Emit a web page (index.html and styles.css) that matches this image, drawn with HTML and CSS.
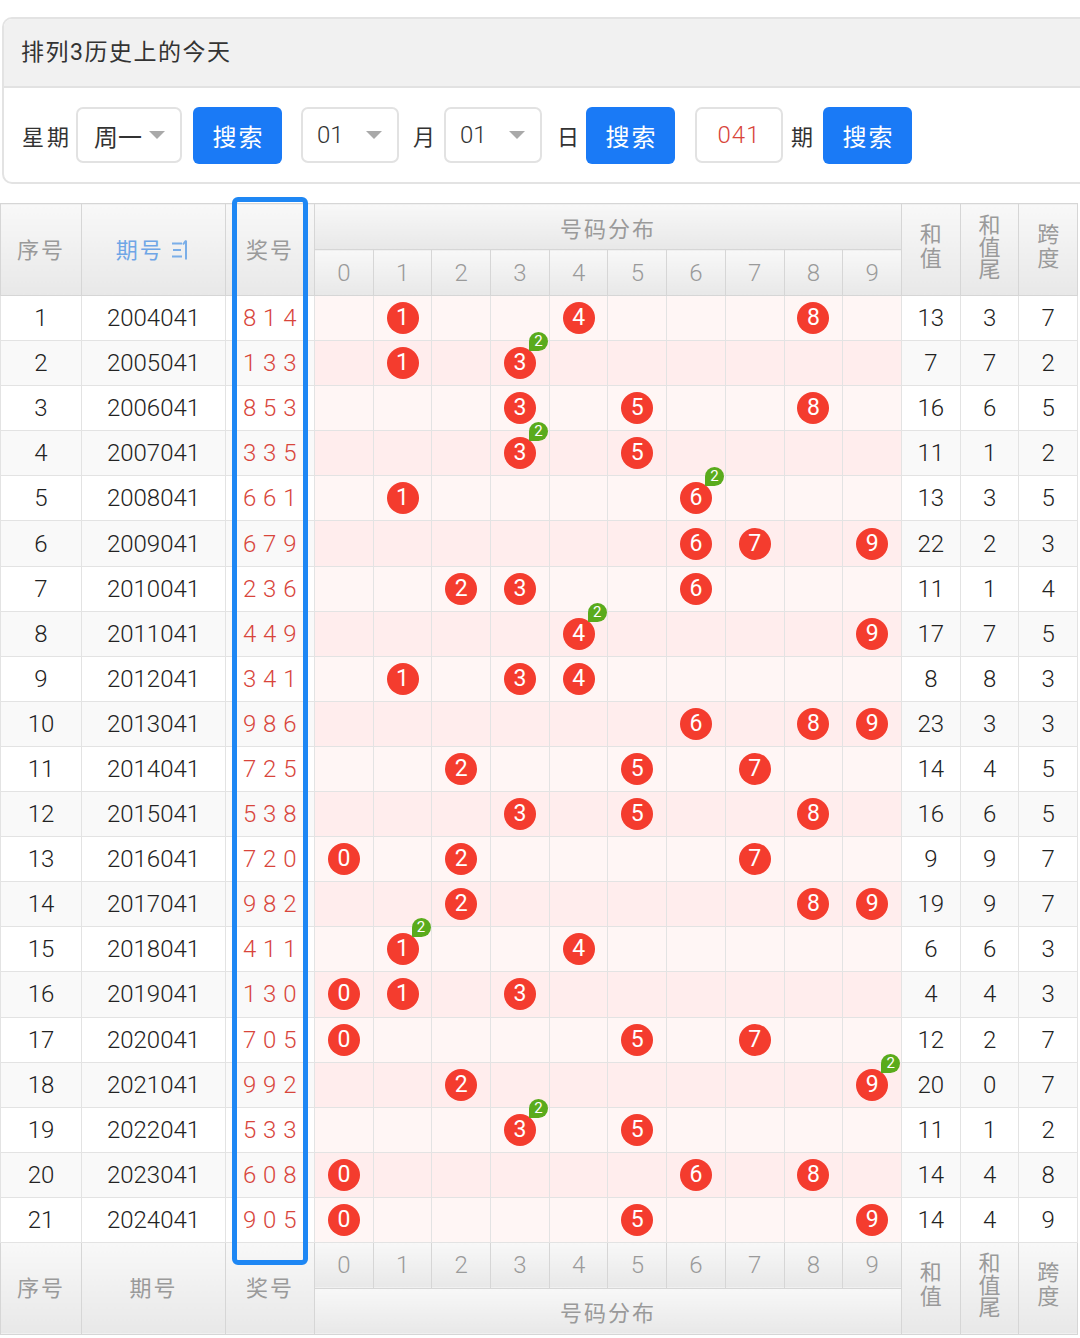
FILE: index.html
```html
<!DOCTYPE html>
<html lang="zh-CN">
<head>
<meta charset="utf-8">
<title>排列3历史上的今天</title>
<link rel="stylesheet" href="styles.css">
</head>
<body>
<div class="panel">
  <div class="panel-head">排列3历史上的今天</div>
  <div class="panel-body">
    <span class="lbl lbl-wide mr4">星期</span>
    <div class="sel sel-w mr11"><span>周一</span><i class="caret"></i></div>
    <button class="btn mr19">搜索</button>
    <div class="sel mr14"><span>01</span><i class="caret"></i></div>
    <span class="lbl mr9">月</span>
    <div class="sel mr15"><span>01</span><i class="caret"></i></div>
    <span class="lbl mr7">日</span>
    <button class="btn mr20">搜索</button>
    <div class="inp mr8">041</div>
    <span class="lbl mr10">期</span>
    <button class="btn">搜索</button>
  </div>
</div>

<div class="table-wrap">
  <table class="chart">
    <colgroup>
      <col class="c-seq"><col class="c-per"><col class="c-win">
      <col class="c-n"><col class="c-n"><col class="c-n"><col class="c-n"><col class="c-n">
      <col class="c-n"><col class="c-n"><col class="c-n"><col class="c-n"><col class="c-n">
      <col class="c-s"><col class="c-s"><col class="c-s">
    </colgroup>
    <thead>
      <tr class="hr">
        <th rowspan="2" class="tl">序号</th>
        <th rowspan="2" class="tl sort">期号 <svg class="sort-ico" width="20" height="24" viewBox="0 0 20 24"><path d="M1 5.5h10M2 12h8M1 18.5h10M15 2.5v19M15 2.5l-3 4" fill="none" stroke="#7aaee8" stroke-width="2"/></svg></th>
        <th rowspan="2" class="tl">奖号</th>
        <th colspan="10">号码分布</th>
        <th rowspan="2" class="vt"><span class="vtxt">和值</span></th>
        <th rowspan="2" class="vt"><span class="vtxt tight">和值尾</span></th>
        <th rowspan="2" class="vt"><span class="vtxt">跨度</span></th>
      </tr>
      <tr class="hr dg">
        <th>0</th><th>1</th><th>2</th><th>3</th><th>4</th><th>5</th><th>6</th><th>7</th><th>8</th><th>9</th>
      </tr>
    </thead>
    <tbody>
      <tr class="r1"><td>1</td><td>2004041</td><td class="win">8 1 4</td>
        <td class="n"></td><td class="n"><i class="ball">1</i></td><td class="n"></td><td class="n"></td><td class="n"><i class="ball">4</i></td><td class="n"></td><td class="n"></td><td class="n"></td><td class="n"><i class="ball">8</i></td><td class="n"></td>
        <td>13</td><td>3</td><td>7</td></tr>
      <tr class="r2"><td>2</td><td>2005041</td><td class="win">1 3 3</td>
        <td class="n"></td><td class="n"><i class="ball">1</i></td><td class="n"></td><td class="n"><i class="ball">3<b class="badge">2</b></i></td><td class="n"></td><td class="n"></td><td class="n"></td><td class="n"></td><td class="n"></td><td class="n"></td>
        <td>7</td><td>7</td><td>2</td></tr>
      <tr class="r1"><td>3</td><td>2006041</td><td class="win">8 5 3</td>
        <td class="n"></td><td class="n"></td><td class="n"></td><td class="n"><i class="ball">3</i></td><td class="n"></td><td class="n"><i class="ball">5</i></td><td class="n"></td><td class="n"></td><td class="n"><i class="ball">8</i></td><td class="n"></td>
        <td>16</td><td>6</td><td>5</td></tr>
      <tr class="r2"><td>4</td><td>2007041</td><td class="win">3 3 5</td>
        <td class="n"></td><td class="n"></td><td class="n"></td><td class="n"><i class="ball">3<b class="badge">2</b></i></td><td class="n"></td><td class="n"><i class="ball">5</i></td><td class="n"></td><td class="n"></td><td class="n"></td><td class="n"></td>
        <td>11</td><td>1</td><td>2</td></tr>
      <tr class="r1"><td>5</td><td>2008041</td><td class="win">6 6 1</td>
        <td class="n"></td><td class="n"><i class="ball">1</i></td><td class="n"></td><td class="n"></td><td class="n"></td><td class="n"></td><td class="n"><i class="ball">6<b class="badge">2</b></i></td><td class="n"></td><td class="n"></td><td class="n"></td>
        <td>13</td><td>3</td><td>5</td></tr>
      <tr class="r2"><td>6</td><td>2009041</td><td class="win">6 7 9</td>
        <td class="n"></td><td class="n"></td><td class="n"></td><td class="n"></td><td class="n"></td><td class="n"></td><td class="n"><i class="ball">6</i></td><td class="n"><i class="ball">7</i></td><td class="n"></td><td class="n"><i class="ball">9</i></td>
        <td>22</td><td>2</td><td>3</td></tr>
      <tr class="r1"><td>7</td><td>2010041</td><td class="win">2 3 6</td>
        <td class="n"></td><td class="n"></td><td class="n"><i class="ball">2</i></td><td class="n"><i class="ball">3</i></td><td class="n"></td><td class="n"></td><td class="n"><i class="ball">6</i></td><td class="n"></td><td class="n"></td><td class="n"></td>
        <td>11</td><td>1</td><td>4</td></tr>
      <tr class="r2"><td>8</td><td>2011041</td><td class="win">4 4 9</td>
        <td class="n"></td><td class="n"></td><td class="n"></td><td class="n"></td><td class="n"><i class="ball">4<b class="badge">2</b></i></td><td class="n"></td><td class="n"></td><td class="n"></td><td class="n"></td><td class="n"><i class="ball">9</i></td>
        <td>17</td><td>7</td><td>5</td></tr>
      <tr class="r1"><td>9</td><td>2012041</td><td class="win">3 4 1</td>
        <td class="n"></td><td class="n"><i class="ball">1</i></td><td class="n"></td><td class="n"><i class="ball">3</i></td><td class="n"><i class="ball">4</i></td><td class="n"></td><td class="n"></td><td class="n"></td><td class="n"></td><td class="n"></td>
        <td>8</td><td>8</td><td>3</td></tr>
      <tr class="r2"><td>10</td><td>2013041</td><td class="win">9 8 6</td>
        <td class="n"></td><td class="n"></td><td class="n"></td><td class="n"></td><td class="n"></td><td class="n"></td><td class="n"><i class="ball">6</i></td><td class="n"></td><td class="n"><i class="ball">8</i></td><td class="n"><i class="ball">9</i></td>
        <td>23</td><td>3</td><td>3</td></tr>
      <tr class="r1"><td>11</td><td>2014041</td><td class="win">7 2 5</td>
        <td class="n"></td><td class="n"></td><td class="n"><i class="ball">2</i></td><td class="n"></td><td class="n"></td><td class="n"><i class="ball">5</i></td><td class="n"></td><td class="n"><i class="ball">7</i></td><td class="n"></td><td class="n"></td>
        <td>14</td><td>4</td><td>5</td></tr>
      <tr class="r2"><td>12</td><td>2015041</td><td class="win">5 3 8</td>
        <td class="n"></td><td class="n"></td><td class="n"></td><td class="n"><i class="ball">3</i></td><td class="n"></td><td class="n"><i class="ball">5</i></td><td class="n"></td><td class="n"></td><td class="n"><i class="ball">8</i></td><td class="n"></td>
        <td>16</td><td>6</td><td>5</td></tr>
      <tr class="r1"><td>13</td><td>2016041</td><td class="win">7 2 0</td>
        <td class="n"><i class="ball">0</i></td><td class="n"></td><td class="n"><i class="ball">2</i></td><td class="n"></td><td class="n"></td><td class="n"></td><td class="n"></td><td class="n"><i class="ball">7</i></td><td class="n"></td><td class="n"></td>
        <td>9</td><td>9</td><td>7</td></tr>
      <tr class="r2"><td>14</td><td>2017041</td><td class="win">9 8 2</td>
        <td class="n"></td><td class="n"></td><td class="n"><i class="ball">2</i></td><td class="n"></td><td class="n"></td><td class="n"></td><td class="n"></td><td class="n"></td><td class="n"><i class="ball">8</i></td><td class="n"><i class="ball">9</i></td>
        <td>19</td><td>9</td><td>7</td></tr>
      <tr class="r1"><td>15</td><td>2018041</td><td class="win">4 1 1</td>
        <td class="n"></td><td class="n"><i class="ball">1<b class="badge">2</b></i></td><td class="n"></td><td class="n"></td><td class="n"><i class="ball">4</i></td><td class="n"></td><td class="n"></td><td class="n"></td><td class="n"></td><td class="n"></td>
        <td>6</td><td>6</td><td>3</td></tr>
      <tr class="r2"><td>16</td><td>2019041</td><td class="win">1 3 0</td>
        <td class="n"><i class="ball">0</i></td><td class="n"><i class="ball">1</i></td><td class="n"></td><td class="n"><i class="ball">3</i></td><td class="n"></td><td class="n"></td><td class="n"></td><td class="n"></td><td class="n"></td><td class="n"></td>
        <td>4</td><td>4</td><td>3</td></tr>
      <tr class="r1"><td>17</td><td>2020041</td><td class="win">7 0 5</td>
        <td class="n"><i class="ball">0</i></td><td class="n"></td><td class="n"></td><td class="n"></td><td class="n"></td><td class="n"><i class="ball">5</i></td><td class="n"></td><td class="n"><i class="ball">7</i></td><td class="n"></td><td class="n"></td>
        <td>12</td><td>2</td><td>7</td></tr>
      <tr class="r2"><td>18</td><td>2021041</td><td class="win">9 9 2</td>
        <td class="n"></td><td class="n"></td><td class="n"><i class="ball">2</i></td><td class="n"></td><td class="n"></td><td class="n"></td><td class="n"></td><td class="n"></td><td class="n"></td><td class="n"><i class="ball">9<b class="badge">2</b></i></td>
        <td>20</td><td>0</td><td>7</td></tr>
      <tr class="r1"><td>19</td><td>2022041</td><td class="win">5 3 3</td>
        <td class="n"></td><td class="n"></td><td class="n"></td><td class="n"><i class="ball">3<b class="badge">2</b></i></td><td class="n"></td><td class="n"><i class="ball">5</i></td><td class="n"></td><td class="n"></td><td class="n"></td><td class="n"></td>
        <td>11</td><td>1</td><td>2</td></tr>
      <tr class="r2"><td>20</td><td>2023041</td><td class="win">6 0 8</td>
        <td class="n"><i class="ball">0</i></td><td class="n"></td><td class="n"></td><td class="n"></td><td class="n"></td><td class="n"></td><td class="n"><i class="ball">6</i></td><td class="n"></td><td class="n"><i class="ball">8</i></td><td class="n"></td>
        <td>14</td><td>4</td><td>8</td></tr>
      <tr class="r1"><td>21</td><td>2024041</td><td class="win">9 0 5</td>
        <td class="n"><i class="ball">0</i></td><td class="n"></td><td class="n"></td><td class="n"></td><td class="n"></td><td class="n"><i class="ball">5</i></td><td class="n"></td><td class="n"></td><td class="n"></td><td class="n"><i class="ball">9</i></td>
        <td>14</td><td>4</td><td>9</td></tr>
    </tbody>
    <tfoot>
      <tr class="hr dg">
        <th rowspan="2" class="tl">序号</th>
        <th rowspan="2" class="tl">期号</th>
        <th rowspan="2" class="tl">奖号</th>
        <th>0</th><th>1</th><th>2</th><th>3</th><th>4</th><th>5</th><th>6</th><th>7</th><th>8</th><th>9</th>
        <th rowspan="2" class="vt"><span class="vtxt">和值</span></th>
        <th rowspan="2" class="vt"><span class="vtxt tight">和值尾</span></th>
        <th rowspan="2" class="vt"><span class="vtxt">跨度</span></th>
      </tr>
      <tr class="hr">
        <th colspan="10">号码分布</th>
      </tr>
    </tfoot>
  </table>
  <div class="highlight"></div>
</div>
</body>
</html>
```
FILE: styles.css
```css
html, body {
  margin: 0;
  padding: 0;
}
body {
  width: 1080px;
  height: 1338px;
  overflow: hidden;
  background: #fff;
  font-family: Roboto, "Noto Sans CJK SC", sans-serif;
  color: #333;
}

/* ---------- search panel ---------- */
.panel {
  margin: 17px 0 0 2px;
  width: 1110px;
  border: 2px solid #e3e3e3;
  border-radius: 10px;
  overflow: hidden;
}
.panel-head {
  box-sizing: border-box;
  height: 69px;
  background: #f1f1f1;
  border-bottom: 2px solid #e2e2e2;
  display: flex;
  align-items: center;
  padding: 0 0 5px 17px;
  font-size: 23px;
  color: #333;
  letter-spacing: 1.5px;
}
.panel-body {
  height: 94px;
  display: flex;
  align-items: center;
  padding-left: 18px;
}
.lbl {
  font-size: 22px;
  color: #333;
  width: 22px;
}
.lbl-wide {
  width: auto;
  letter-spacing: 3px;
}
.sel {
  box-sizing: border-box;
  width: 98px;
  height: 56px;
  border: 2px solid #e2e2e2;
  border-radius: 7px;
  display: flex;
  align-items: center;
  justify-content: space-between;
  padding: 0 15px 0 14px;
  font-size: 24px;
  font-weight: 300;
  color: #333;
}
.sel-w {
  width: 106px;
  padding-left: 16px;
  font-weight: 400;
}
.caret {
  width: 0;
  height: 0;
  border-left: 8px solid transparent;
  border-right: 8px solid transparent;
  border-top: 8px solid #a9a9a9;
}
.btn {
  box-sizing: border-box;
  width: 89px;
  height: 57px;
  border: none;
  border-radius: 6px;
  background: #1a7af6;
  color: #fff;
  font-family: "Noto Sans CJK SC", sans-serif;
  font-size: 24px;
  letter-spacing: 2px;
  padding: 0 0 0 2px;
}
.inp {
  box-sizing: border-box;
  width: 88px;
  height: 56px;
  border: 2px solid #e2e2e2;
  border-radius: 7px;
  display: flex;
  align-items: center;
  justify-content: center;
  font-size: 24px;
  font-weight: 300;
  color: #d8453b;
  letter-spacing: 1px;
}
.mr4 { margin-right: 4px; }
.mr7 { margin-right: 7px; }
.mr8 { margin-right: 8px; }
.mr9 { margin-right: 9px; }
.mr10 { margin-right: 10px; }
.mr11 { margin-right: 11px; }
.mr14 { margin-right: 14px; }
.mr15 { margin-right: 15px; }
.mr19 { margin-right: 19px; }
.mr20 { margin-right: 20px; }

/* ---------- chart table ---------- */
.table-wrap {
  position: relative;
  margin-top: 19px;
}
.chart {
  width: 1078px;
  table-layout: fixed;
  border-collapse: collapse;
}
.c-seq { width: 81px; }
.c-per { width: 144px; }
.c-win { width: 89px; }
.c-n { width: 58.7px; }
.c-s { width: 58.7px; }

.chart th {
  background: linear-gradient(#f8f8f8, #e8e8e8);
  color: #9a9a9a;
  font-weight: normal;
  font-size: 22px;
  border: 1px solid #d6d6d6;
  padding: 0;
  letter-spacing: 2px;
}
.chart th.tl {
  padding-bottom: 4px;
}
.chart .hr {
  height: 46px;
}
.chart .dg th {
  font-size: 24px;
  font-weight: 300;
  letter-spacing: 0;
  font-family: Roboto, sans-serif;
}
.chart .dg th.tl {
  font-size: 22px;
  font-weight: normal;
  letter-spacing: 2px;
  font-family: Roboto, "Noto Sans CJK SC", sans-serif;
}
.chart th.vt {
  font-size: 22px;
  font-weight: normal;
  letter-spacing: 0;
  font-family: "Noto Sans CJK SC", sans-serif;
}
.vtxt {
  display: inline-block;
  writing-mode: vertical-rl;
  line-height: 26px;
  letter-spacing: 2px;
}
.vtxt.tight {
  letter-spacing: 0;
}
.chart th.sort {
  color: #6fa6e6;
}
.sort-ico {
  vertical-align: -4px;
}

.chart tbody tr {
  height: 45.1px;
}
.chart td {
  border: 1px solid #e3e3e3;
  text-align: center;
  padding: 0;
  font-size: 24px;
  font-weight: 300;
  color: #222;
}
.chart .r1 td { background: #fff; }
.chart .r2 td { background: #f9f9f9; }
.chart .r1 td.n { background: #fff6f5; }
.chart .r2 td.n { background: #ffeded; }
.chart td.win {
  color: #d8453b;
  letter-spacing: 0.5px;
}

.ball {
  position: relative;
  display: inline-block;
  width: 32px;
  height: 32px;
  line-height: 32px;
  border-radius: 50%;
  background: #f43c2e;
  color: #fff;
  font-style: normal;
  font-size: 23px;
  font-weight: 400;
  vertical-align: middle;
}
.badge {
  position: absolute;
  left: 25px;
  top: -15px;
  width: 19px;
  height: 19px;
  line-height: 19px;
  border-radius: 50% 50% 50% 0;
  background: #5aab1c;
  color: #fff;
  font-size: 15px;
  font-weight: normal;
}

.highlight {
  position: absolute;
  left: 232px;
  top: -6px;
  width: 76px;
  height: 1068px;
  box-sizing: border-box;
  border: 5px solid #1e87f4;
  border-radius: 6px;
  pointer-events: none;
}
```
